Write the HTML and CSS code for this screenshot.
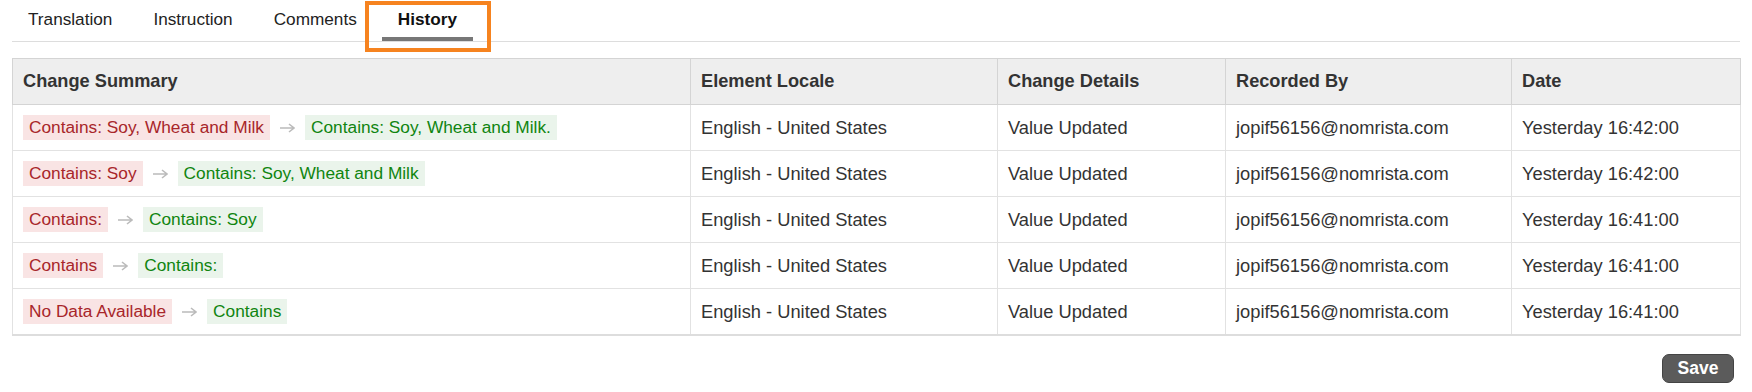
FILE: index.html
```html
<!DOCTYPE html>
<html>
<head>
    <title>Element History</title>
    <meta name="viewport" content="width=device-width, initial-scale=1.0">
    <link rel="stylesheet" href="styles.css">
</head>
<body>
    <div class="page">
        <!-- Tabs -->
        <div class="tabs">
            <div class="tab">Translation</div>
            <div class="tab">Instruction</div>
            <div class="tab">Comments</div>
            <div class="tab active">History</div>
            <div class="highlight"></div>
        </div>

        <!-- History table -->
        <table class="history">
            <colgroup>
                <col style="width: 678px">
                <col style="width: 307px">
                <col style="width: 228px">
                <col style="width: 286px">
                <col style="width: 229px">
            </colgroup>
            <thead>
                <tr>
                    <th>Change Summary</th>
                    <th>Element Locale</th>
                    <th>Change Details</th>
                    <th>Recorded By</th>
                    <th>Date</th>
                </tr>
            </thead>
            <tbody>
                <tr>
                    <td>
                        <div class="change">
                            <span class="old">Contains: Soy, Wheat and Milk</span>
                            <svg class="arrow" width="15" height="10" viewBox="0 0 15 10"><path d="M0 5H14M9 1L14 5L9 9" fill="none" stroke="#bbb" stroke-width="1.6"/></svg>
                            <span class="new">Contains: Soy, Wheat and Milk.</span>
                        </div>
                    </td>
                    <td>English - United States</td>
                    <td>Value Updated</td>
                    <td>jopif56156@nomrista.com</td>
                    <td>Yesterday 16:42:00</td>
                </tr>
                <tr>
                    <td>
                        <div class="change">
                            <span class="old">Contains: Soy</span>
                            <svg class="arrow" width="15" height="10" viewBox="0 0 15 10"><path d="M0 5H14M9 1L14 5L9 9" fill="none" stroke="#bbb" stroke-width="1.6"/></svg>
                            <span class="new">Contains: Soy, Wheat and Milk</span>
                        </div>
                    </td>
                    <td>English - United States</td>
                    <td>Value Updated</td>
                    <td>jopif56156@nomrista.com</td>
                    <td>Yesterday 16:42:00</td>
                </tr>
                <tr>
                    <td>
                        <div class="change">
                            <span class="old">Contains:</span>
                            <svg class="arrow" width="15" height="10" viewBox="0 0 15 10"><path d="M0 5H14M9 1L14 5L9 9" fill="none" stroke="#bbb" stroke-width="1.6"/></svg>
                            <span class="new">Contains: Soy</span>
                        </div>
                    </td>
                    <td>English - United States</td>
                    <td>Value Updated</td>
                    <td>jopif56156@nomrista.com</td>
                    <td>Yesterday 16:41:00</td>
                </tr>
                <tr>
                    <td>
                        <div class="change">
                            <span class="old">Contains</span>
                            <svg class="arrow" width="15" height="10" viewBox="0 0 15 10"><path d="M0 5H14M9 1L14 5L9 9" fill="none" stroke="#bbb" stroke-width="1.6"/></svg>
                            <span class="new">Contains:</span>
                        </div>
                    </td>
                    <td>English - United States</td>
                    <td>Value Updated</td>
                    <td>jopif56156@nomrista.com</td>
                    <td>Yesterday 16:41:00</td>
                </tr>
                <tr>
                    <td>
                        <div class="change">
                            <span class="old">No Data Available</span>
                            <svg class="arrow" width="15" height="10" viewBox="0 0 15 10"><path d="M0 5H14M9 1L14 5L9 9" fill="none" stroke="#bbb" stroke-width="1.6"/></svg>
                            <span class="new">Contains</span>
                        </div>
                    </td>
                    <td>English - United States</td>
                    <td>Value Updated</td>
                    <td>jopif56156@nomrista.com</td>
                    <td>Yesterday 16:41:00</td>
                </tr>
            </tbody>
        </table>

        <div class="actions">
            <button class="save">Save</button>
        </div>
    </div>
</body>
</html>
```

FILE: styles.css
```css
body {
    margin: 0;
    font-family: "Liberation Sans", Arial, sans-serif;
    color: #333;
}
.page {
    padding: 0 12px;
}

/* Tabs */
.tabs {
    position: relative;
    display: flex;
    gap: 9px;
    border-bottom: 1px solid #ddd;
}
.tab {
    padding: 9px 16px 8px;
    font-size: 17.2px;
    line-height: 20px;
    color: #222;
    border-bottom: 4px solid transparent;
}
.tab.active {
    font-weight: bold;
    color: #111;
    border-bottom-color: #777;
}
.highlight {
    position: absolute;
    left: 353px;
    top: 1px;
    width: 118px;
    height: 43px;
    border: 4px solid #f6831f;
}

/* Table */
.history {
    width: 1728px;
    margin-top: 16px;
    border-collapse: collapse;
    table-layout: fixed;
    border: 1px solid #d4d4d4;
    border-bottom: 2px solid #ddd;
}
.history th,
.history td {
    height: 45px;
    padding: 0 10px;
    text-align: left;
    vertical-align: middle;
    white-space: nowrap;
}
.history th {
    background: #eee;
    font-size: 18.2px;
    font-weight: bold;
    color: #333;
    border: 1px solid #d4d4d4;
}
.history td {
    font-size: 18.3px;
    color: #333;
    border: 1px solid #e2e2e2;
}
.change {
    display: flex;
    align-items: center;
}
.old,
.new {
    padding: 3px 6px;
    font-size: 17.3px;
    line-height: 19px;
}
.old {
    background: #f9e4e4;
    color: #a8262a;
}
.new {
    background: #eaf4eb;
    color: #108510;
}
.arrow {
    margin: 0 10px;
}

/* Save */
.actions {
    display: flex;
    justify-content: flex-end;
    margin-top: 18px;
    padding-right: 6px;
}
.save {
    width: 72px;
    height: 29px;
    padding: 0;
    background: #5b5b5b;
    border: 1px solid #444;
    border-radius: 7px;
    color: #fff;
    font-family: "Liberation Sans", Arial, sans-serif;
    font-size: 17.5px;
    font-weight: bold;
    cursor: pointer;
}
```
